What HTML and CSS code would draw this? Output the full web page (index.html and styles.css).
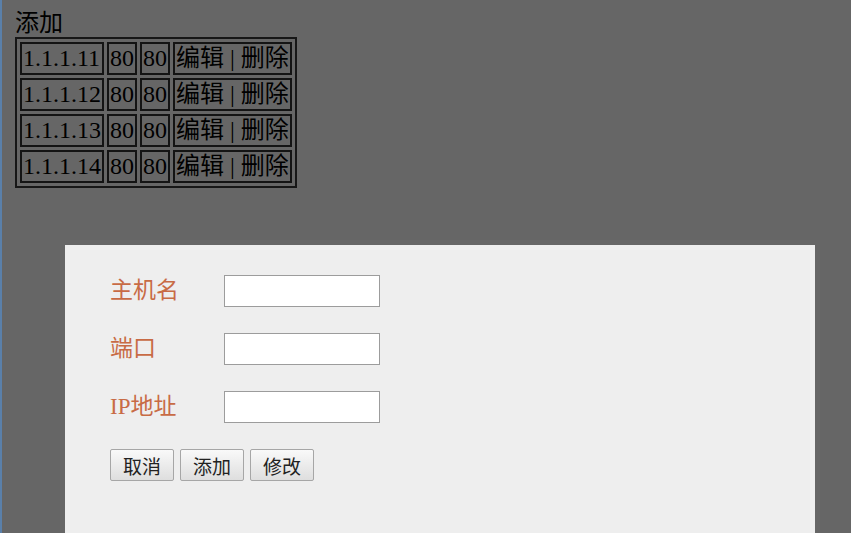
FILE: index.html
```html
<!DOCTYPE html>
<html lang="zh-CN">
<head>
  <meta charset="UTF-8">
  <title>主机列表</title>
  <link rel="stylesheet" href="styles.css">
</head>
<body>
  <div class="add-link">添加</div>
  <table class="host-table">
    <tr><td>1.1.1.11</td><td>80</td><td>80</td><td>编辑 | 删除</td></tr>
    <tr><td>1.1.1.12</td><td>80</td><td>80</td><td>编辑 | 删除</td></tr>
    <tr><td>1.1.1.13</td><td>80</td><td>80</td><td>编辑 | 删除</td></tr>
    <tr><td>1.1.1.14</td><td>80</td><td>80</td><td>编辑 | 删除</td></tr>
  </table>

  <div class="mask">
    <div class="dialog">
      <div class="field">
        <label>主机名</label>
        <input type="text">
      </div>
      <div class="field">
        <label>端口</label>
        <input type="text">
      </div>
      <div class="field">
        <label>IP地址</label>
        <input type="text">
      </div>
      <div class="actions">
        <button>取消</button>
        <button>添加</button>
        <button>修改</button>
      </div>
    </div>
  </div>
</body>
</html>
```

FILE: styles.css
```css
html {
  border-left: 2px solid #5a80aa;
  min-height: 100%;
}

body {
  margin: 9px 0 0 13px;
  font-family: "Liberation Serif", "Noto Sans CJK SC", serif;
  font-size: 24px;
  color: #000;
  background: #fff;
}

.add-link {
  line-height: 28px;
}

.host-table {
  border: 2px solid #3a3a3a;
  border-spacing: 3px;
}

.host-table td {
  border: 2px solid #333;
  padding: 1px;
  line-height: 27px;
  white-space: nowrap;
}

.mask {
  position: fixed;
  top: 0;
  right: 0;
  bottom: 0;
  left: 2px;
  background: rgba(0, 0, 0, 0.6);
}

.dialog {
  position: absolute;
  left: 63px;
  top: 245px;
  width: 750px;
  height: 450px;
  box-sizing: border-box;
  padding: 30px 45px;
  background: #eee;
  display: flex;
  flex-direction: column;
  gap: 26px;
}

.field {
  display: flex;
  align-items: center;
  height: 32px;
}

.field label {
  width: 114px;
  padding-bottom: 6px;
  font-size: 23px;
  color: #c86b45;
}

.field input {
  width: 156px;
  height: 32px;
  box-sizing: border-box;
  border: 1px solid #9c9c9c;
  background: #fff;
  margin: 0;
  padding: 0 4px;
}

.actions {
  display: flex;
  gap: 6px;
}

.actions button {
  width: 64px;
  height: 32px;
  margin: 0;
  padding: 0;
  font-family: "Liberation Serif", "Noto Sans CJK SC", serif;
  font-size: 19px;
  color: #222;
  border: 1px solid #a6a6a6;
  border-radius: 2px;
  background: linear-gradient(#f9f9f9, #dedede);
}
```
